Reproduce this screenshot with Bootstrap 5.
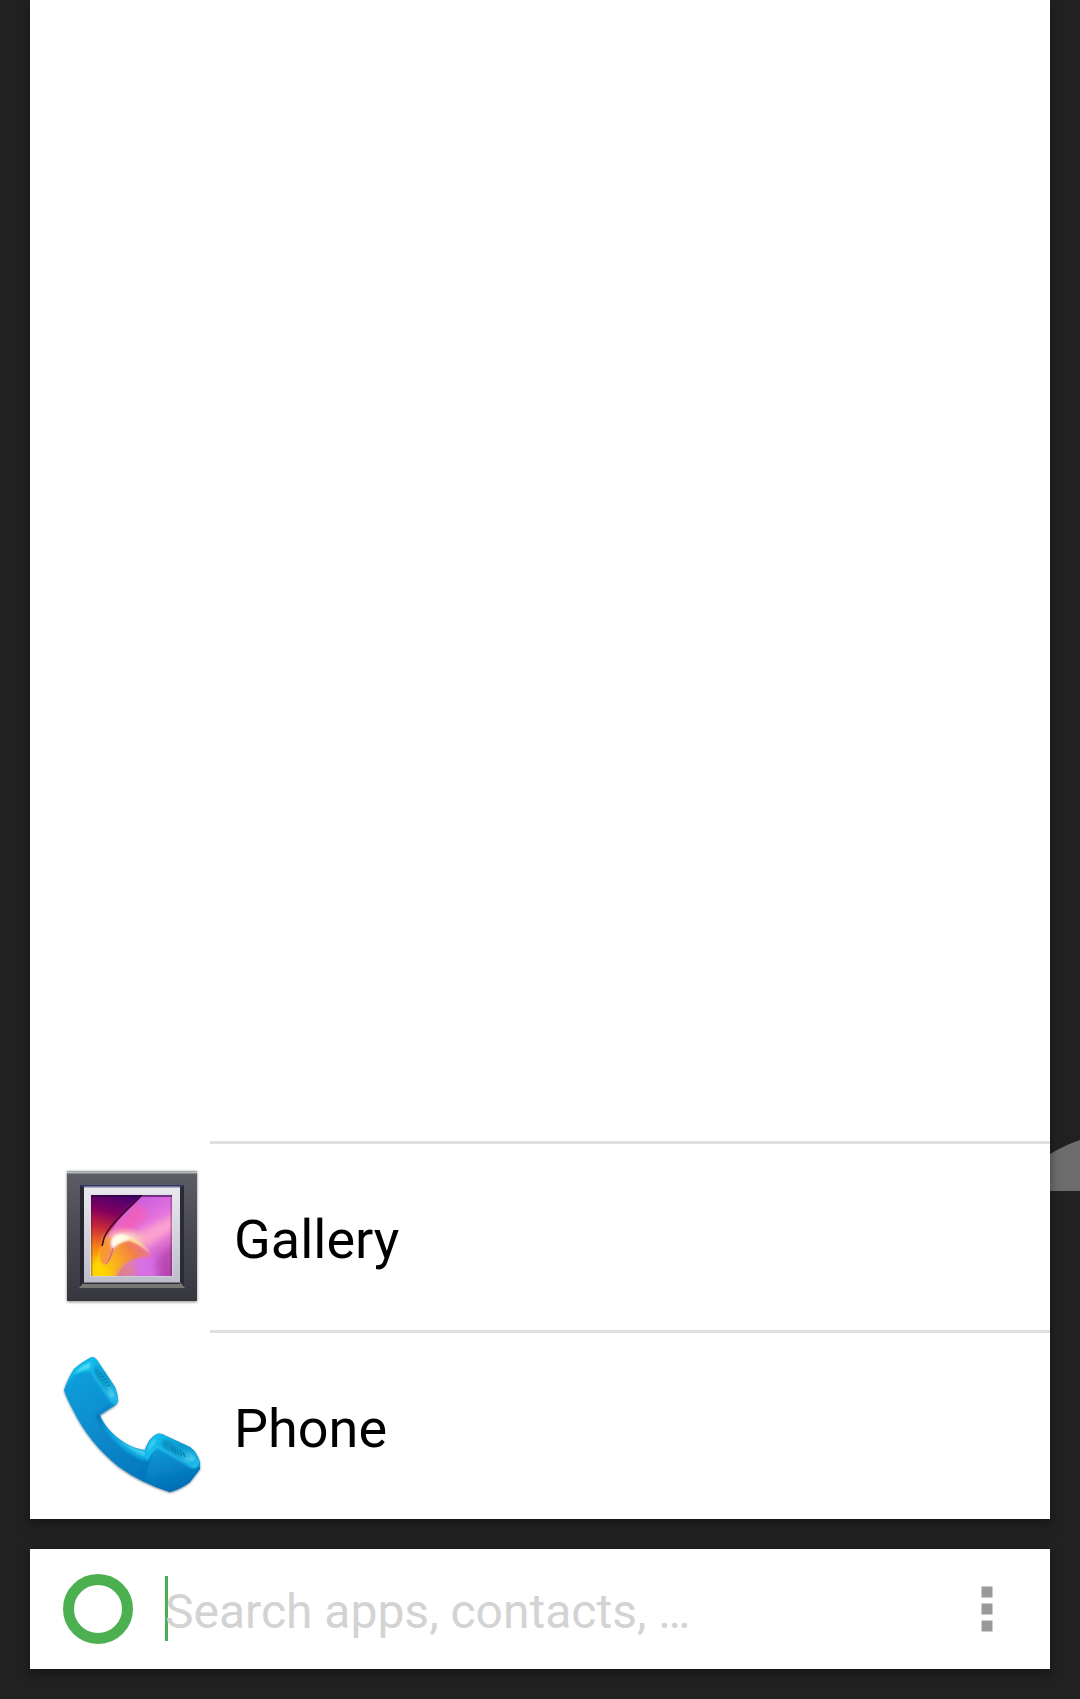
<!DOCTYPE html>
<html lang="en">
<head>
<meta charset="utf-8">
<meta name="viewport" content="width=device-width, initial-scale=1">
<title>Launcher search</title>
<link href="https://cdn.jsdelivr.net/npm/bootstrap@5.3.0/dist/css/bootstrap.min.css" rel="stylesheet">
<style>
  body { background: #212121; font-family: Roboto, "Noto Sans", sans-serif; color: #000; overflow-x: hidden; }
  .launcher { padding: 0 30px 30px; gap: 30px; }
  .sheet { background: #fff; box-shadow: 0 4px 10px rgba(0, 0, 0, .4); }
  .app-rule { height: 3px; margin-left: 180px; background: #dfdfdf; }
  .app-link { height: 186px; padding-left: 30px; gap: 30px; color: #000; font-size: 54px; line-height: 64px; }
  .app-link svg { width: 144px; height: 144px; }
  .app-name { padding-top: 6px; }
  .backdrop-shape { left: 100%; bottom: 328px; width: 30px; height: 52px; z-index: -1; }
  .search-bar { height: 120px; padding: 0 30px; }
  .ring { width: 76px; height: 76px; }
  .query { margin-left: 29px; }
  .query::before { content: ""; position: absolute; left: 0; top: 0; width: 3px; height: 65px; background: #4caf50; }
  .query-box, .query-box:focus { height: 66px; padding: 4px 0 0; border: 0; border-radius: 0; box-shadow: none; background: transparent; font-size: 48px; line-height: 62px; position: relative; color: #000; }
  .query-box::placeholder { color: #d3d3d3; opacity: 1; }
  .more { width: 66px; height: 90px; }
</style>
<script src="https://cdn.jsdelivr.net/npm/bootstrap@5.3.0/dist/js/bootstrap.bundle.min.js"></script>
</head>
<body>
<div class="launcher d-flex flex-column min-vh-100">
  <main class="position-relative d-flex flex-column flex-grow-1 z-0">
    <svg class="backdrop-shape position-absolute" viewBox="0 0 30 52" aria-hidden="true"><path d="M0 15Q15 6 30 1V52H0Z" fill="#6d6d6d"/></svg>
    <div class="sheet d-flex flex-column justify-content-end flex-grow-1">
      <ul class="list-unstyled mb-0">
        <li>
          <div class="app-rule"></div>
          <a class="app-link d-flex align-items-center text-decoration-none" href="#gallery">
            <svg viewBox="10 15 144 144" aria-hidden="true">
              <defs>
                <linearGradient id="frame" x1="0" y1="0" x2="0" y2="1"><stop offset="0" stop-color="#5c5d65"/><stop offset=".55" stop-color="#454650"/><stop offset="1" stop-color="#36373e"/></linearGradient>
                <linearGradient id="mat" x1="0" y1="0" x2="0" y2="1"><stop offset="0" stop-color="#e9e8ef"/><stop offset="1" stop-color="#bdbdcb"/></linearGradient>
                <linearGradient id="dusk" gradientUnits="userSpaceOnUse" x1="68" y1="45" x2="50" y2="118"><stop offset="0" stop-color="#4a0070"/><stop offset=".25" stop-color="#82005c"/><stop offset=".48" stop-color="#c92a38"/><stop offset=".72" stop-color="#f47a1c"/><stop offset="1" stop-color="#ffd000"/></linearGradient>
                <linearGradient id="petal" gradientUnits="userSpaceOnUse" x1="80" y1="50" x2="122" y2="126"><stop offset="0" stop-color="#c55be0"/><stop offset=".3" stop-color="#e272dc"/><stop offset=".5" stop-color="#ee86d6"/><stop offset=".72" stop-color="#d060c8"/><stop offset="1" stop-color="#b848b4"/></linearGradient>
                <linearGradient id="fold" gradientUnits="userSpaceOnUse" x1="52" y1="122" x2="96" y2="94"><stop offset="0" stop-color="#ffd800"/><stop offset=".35" stop-color="#fbae20"/><stop offset=".7" stop-color="#f28048"/><stop offset="1" stop-color="#ea70a8"/></linearGradient>
                <radialGradient id="glow"><stop offset="0" stop-color="#fffbe9"/><stop offset=".35" stop-color="#ffe4cc" stop-opacity=".9"/><stop offset="1" stop-color="#ffaf90" stop-opacity="0"/></radialGradient>
                <clipPath id="photo"><path d="M41 45h81v81H41z"/></clipPath>
                <filter id="soft" x="-30%" y="-30%" width="160%" height="160%"><feGaussianBlur stdDeviation="3"/></filter>
                <filter id="tiny" x="-20%" y="-20%" width="140%" height="140%"><feGaussianBlur stdDeviation=".8"/></filter>
              </defs>
              <rect x="16.500" y="21" width="131" height="131.500" rx="2" fill="#777" opacity=".65" filter="url(#tiny)"/>
              <rect x="17" y="21.500" width="130" height="129.500" rx="1" fill="url(#frame)"/>
              <path d="M17 22.500h130" stroke="#b4bab7" stroke-width="2"/>
              <path d="M30 35h104l-4 3H34z" fill="#35366a"/>
              <path d="M30 35l4 3v95l-4 4z" fill="#25262e"/>
              <path d="M134 35l-4 3v95l4 4z" fill="#2b2c33"/>
              <path d="M29 138l5-6h96l5 6z" fill="#777874"/>
              <path d="M33 132h97v2H33z" fill="#303238"/>
              <rect x="34" y="37.500" width="96" height="95" fill="url(#mat)"/>
              <path d="M34 37h96" stroke="#fff" stroke-opacity=".6"/>
              <rect x="40" y="44" width="82.500" height="82.500" fill="#dedee7"/>
              <g clip-path="url(#photo)">
                <path d="M41 45h81v81H41z" fill="url(#dusk)"/>
                <path d="M92 45C78 61 57 77 53 101C51 111 52 118 52 126H122V45Z" fill="url(#petal)"/>
                <path d="M88 52Q64 74 54 96L62 92L83 80L98 66Z" fill="#ff58a8" opacity=".6" filter="url(#soft)"/>
                <path d="M125 64L90 82Q84 86 84 90L98 96L125 78Z" fill="#ffa8cc" opacity=".8" filter="url(#soft)"/>
                <path d="M77 110Q88 104 100 106L112 104V130H73Z" fill="#da74ee" opacity=".8" filter="url(#soft)"/>
                <path d="M104 110L125 94V130H108Z" fill="#b03ca4" opacity=".55" filter="url(#soft)"/>
                <ellipse cx="74" cy="90" rx="25" ry="14" fill="url(#glow)"/>
                <path d="M53 90Q46 108 43 128H66Q70 116 82 110Q92 106 101 107Q92 92 80 90Q68 92 64 100Q60 112 56 114Q50 114 50 106Z" fill="url(#fold)" filter="url(#tiny)"/>
                <path d="M54 88Q49 101 50 108Q52 116 57 113Q61 106 62 98Q58 94 62 87Z" fill="#fb9a24" opacity=".85" filter="url(#tiny)"/>
                <path d="M62 98Q59 88 67 85Q75 83 80 89Q70 90 63 98Z" fill="#fffce8" filter="url(#tiny)"/>
                <path d="M78 89Q88 87 101 104Q90 94 78 90Z" fill="#ffe498" filter="url(#tiny)"/>
                <path d="M66 121Q74 114 84 111L85 128H65Z" fill="#e68a70" opacity=".7" filter="url(#soft)"/>
                <path d="M92 45C77 61 61 72 54 88L52 96" fill="none" stroke="#34082e" stroke-width="1.500"/>
                <path d="M63 98Q61 109 56 114" fill="none" stroke="#a85a08" stroke-width="1" opacity=".6"/>
                <path d="M41 45h81" stroke="#280830" stroke-width="4" opacity=".55"/>
                <path d="M41 45v81M122 45v81" stroke="#401030" stroke-width="3" opacity=".3"/>
              </g>
            </svg>
            <span class="app-name">Gallery</span>
          </a>
        </li>
        <li>
          <div class="app-rule"></div>
          <a class="app-link d-flex align-items-center text-decoration-none" href="#phone">
            <svg viewBox="10 14 144 144" aria-hidden="true">
              <defs>
                <linearGradient id="handset" x1=".1" y1=".1" x2=".75" y2="1"><stop offset="0" stop-color="#0a9edb"/><stop offset=".45" stop-color="#0789cb"/><stop offset="1" stop-color="#0670b7"/></linearGradient>
                <linearGradient id="side" x1="0" y1="0" x2="1" y2="1"><stop offset="0" stop-color="#10c4f2"/><stop offset=".5" stop-color="#0a9ad0"/><stop offset="1" stop-color="#24c0f0"/></linearGradient>
                <linearGradient id="rim" x1="0" y1="0" x2="1" y2="1"><stop offset="0" stop-color="#0a8cbc"/><stop offset=".6" stop-color="#12a2d2"/><stop offset="1" stop-color="#60dcfa"/></linearGradient>
                <linearGradient id="lowface" x1="0" y1="0" x2=".3" y2="1"><stop offset="0" stop-color="#0ca6e0"/><stop offset=".5" stop-color="#0789cb"/><stop offset="1" stop-color="#066cb1"/></linearGradient>
                <filter id="drop" x="-10%" y="-10%" width="120%" height="120%"><feDropShadow dx="0" dy="1" stdDeviation="1.300" flood-color="#18334a" flood-opacity=".6"/></filter>
                <filter id="blur" x="-20%" y="-20%" width="140%" height="140%"><feGaussianBlur stdDeviation="1"/></filter>
                <clipPath id="outline"><path d="M42 17Q45 17 47 20L65 47Q68 54 68 61Q67 64 64 66L50 75C56 91 76 108 95 110L96 107Q100 97 107 94Q109 93 112 94L140 107Q147 112 150 122V129L140 142Q131 149 120 152Q91 143 69 127Q39 103 23 70Q16 57 14 50Q18 38 24 29Q33 21 42 17Z"/></clipPath>
              </defs>
              <path d="M42 17Q45 17 47 20L65 47Q68 54 68 61Q67 64 64 66L50 75C56 91 76 108 95 110L96 107Q100 97 107 94Q109 93 112 94L140 107Q147 112 150 122V129L140 142Q131 149 120 152Q91 143 69 127Q39 103 23 70Q16 57 14 50Q18 38 24 29Q33 21 42 17Z" fill="url(#handset)" filter="url(#drop)"/>
              <g clip-path="url(#outline)">
                <path d="M42 17L24 28L14 49L24 35Q33 30 41 32Z" fill="#10bce8" filter="url(#blur)"/>
                <path d="M25 34Q29 26 41 22L40 28Q31 30 25 34Z" fill="#70e7fa" opacity=".7" filter="url(#blur)"/>
                <path d="M41 16Q45 17 47 20L65 47Q68 54 68 61L64 65L43 34Q40 23 41 16Z" fill="url(#side)"/>
                <path d="M46 26L59 44Q64 50 64 57Q59 58 57 54L46 37Q43 31 46 26Z" fill="url(#rim)" filter="url(#blur)"/>
                <path d="M49 34l3-1M51 37l3-1M53 40l3-1M55 43l3-1M57 46l3-1" stroke="#0679a6" stroke-width="1"/>
                <path d="M42 24Q41 30 43 34L63 64" fill="none" stroke="#20bcee" stroke-width="2" filter="url(#blur)"/>
                <path d="M50 75C57 91 76 108 95 110L96 121C74 114 56 96 50 75Z" fill="#08a8de" filter="url(#blur)"/>
                <path d="M60 89Q75 107 96 111L96 117Q76 110 60 89Z" fill="#59dff7" opacity=".7" filter="url(#blur)"/>
                <path d="M67 61L49 73Q50 82 54 88Q48 82 46 76Q52 68 67 61Z" fill="#055f9b" opacity=".6" filter="url(#blur)"/>
                <path d="M108 106L144 127L152 124L140 144L120 154Q101 149 96 139Q98 118 108 106Z" fill="url(#lowface)" opacity=".8" filter="url(#blur)"/>
                <path d="M95 110Q100 97 107 93L108 107Q101 112 97 120Q94 117 95 110Z" fill="#12b8e8"/>
                <path d="M98 107Q101 100 106 97L106 103Q101 107 98 113Z" fill="#50dcf8" opacity=".6" filter="url(#blur)"/>
                <path d="M107 93Q109 93 112 94L140 107Q147 112 150 122L145 128L108 107Q105 100 107 93Z" fill="url(#side)"/>
                <path d="M114 99L136 109Q144 114 145 120L138 122L116 110Q110 105 114 99Z" fill="url(#rim)" filter="url(#blur)"/>
                <path d="M121 106l2 6M124 107l2 7M127 109l2 6M130 110l2 6M133 112l2 5" stroke="#0679a6" stroke-width="1"/>
                <path d="M97 120Q101 111 108 107L142 127Q147 128 150 123" fill="none" stroke="#26c4f0" stroke-width="2" filter="url(#blur)"/>
              </g>
            </svg>
            <span class="app-name">Phone</span>
          </a>
        </li>
      </ul>
    </div>
  </main>
  <form class="search-bar sheet d-flex align-items-center" role="search">
    <svg class="ring flex-shrink-0" viewBox="0 0 76 76" aria-hidden="true"><circle cx="38" cy="38" r="29.500" fill="none" stroke="#4caf50" stroke-width="11"/></svg>
    <div class="query position-relative flex-grow-1">
      <input class="query-box form-control" type="text" aria-label="Search apps and contacts" placeholder="Search apps, contacts, …" autocomplete="off">
    </div>
    <button class="more btn border-0 p-0 d-flex align-items-center justify-content-center flex-shrink-0" type="button" aria-label="More options">
      <svg width="12" height="46" viewBox="0 0 12 46" aria-hidden="true" fill="#999"><path d="M.5.5h11v11H.5zM.5 17.500h11v11H.5zM.5 34.500h11v11H.5z"/></svg>
    </button>
  </form>
</div>
</body>
</html>
